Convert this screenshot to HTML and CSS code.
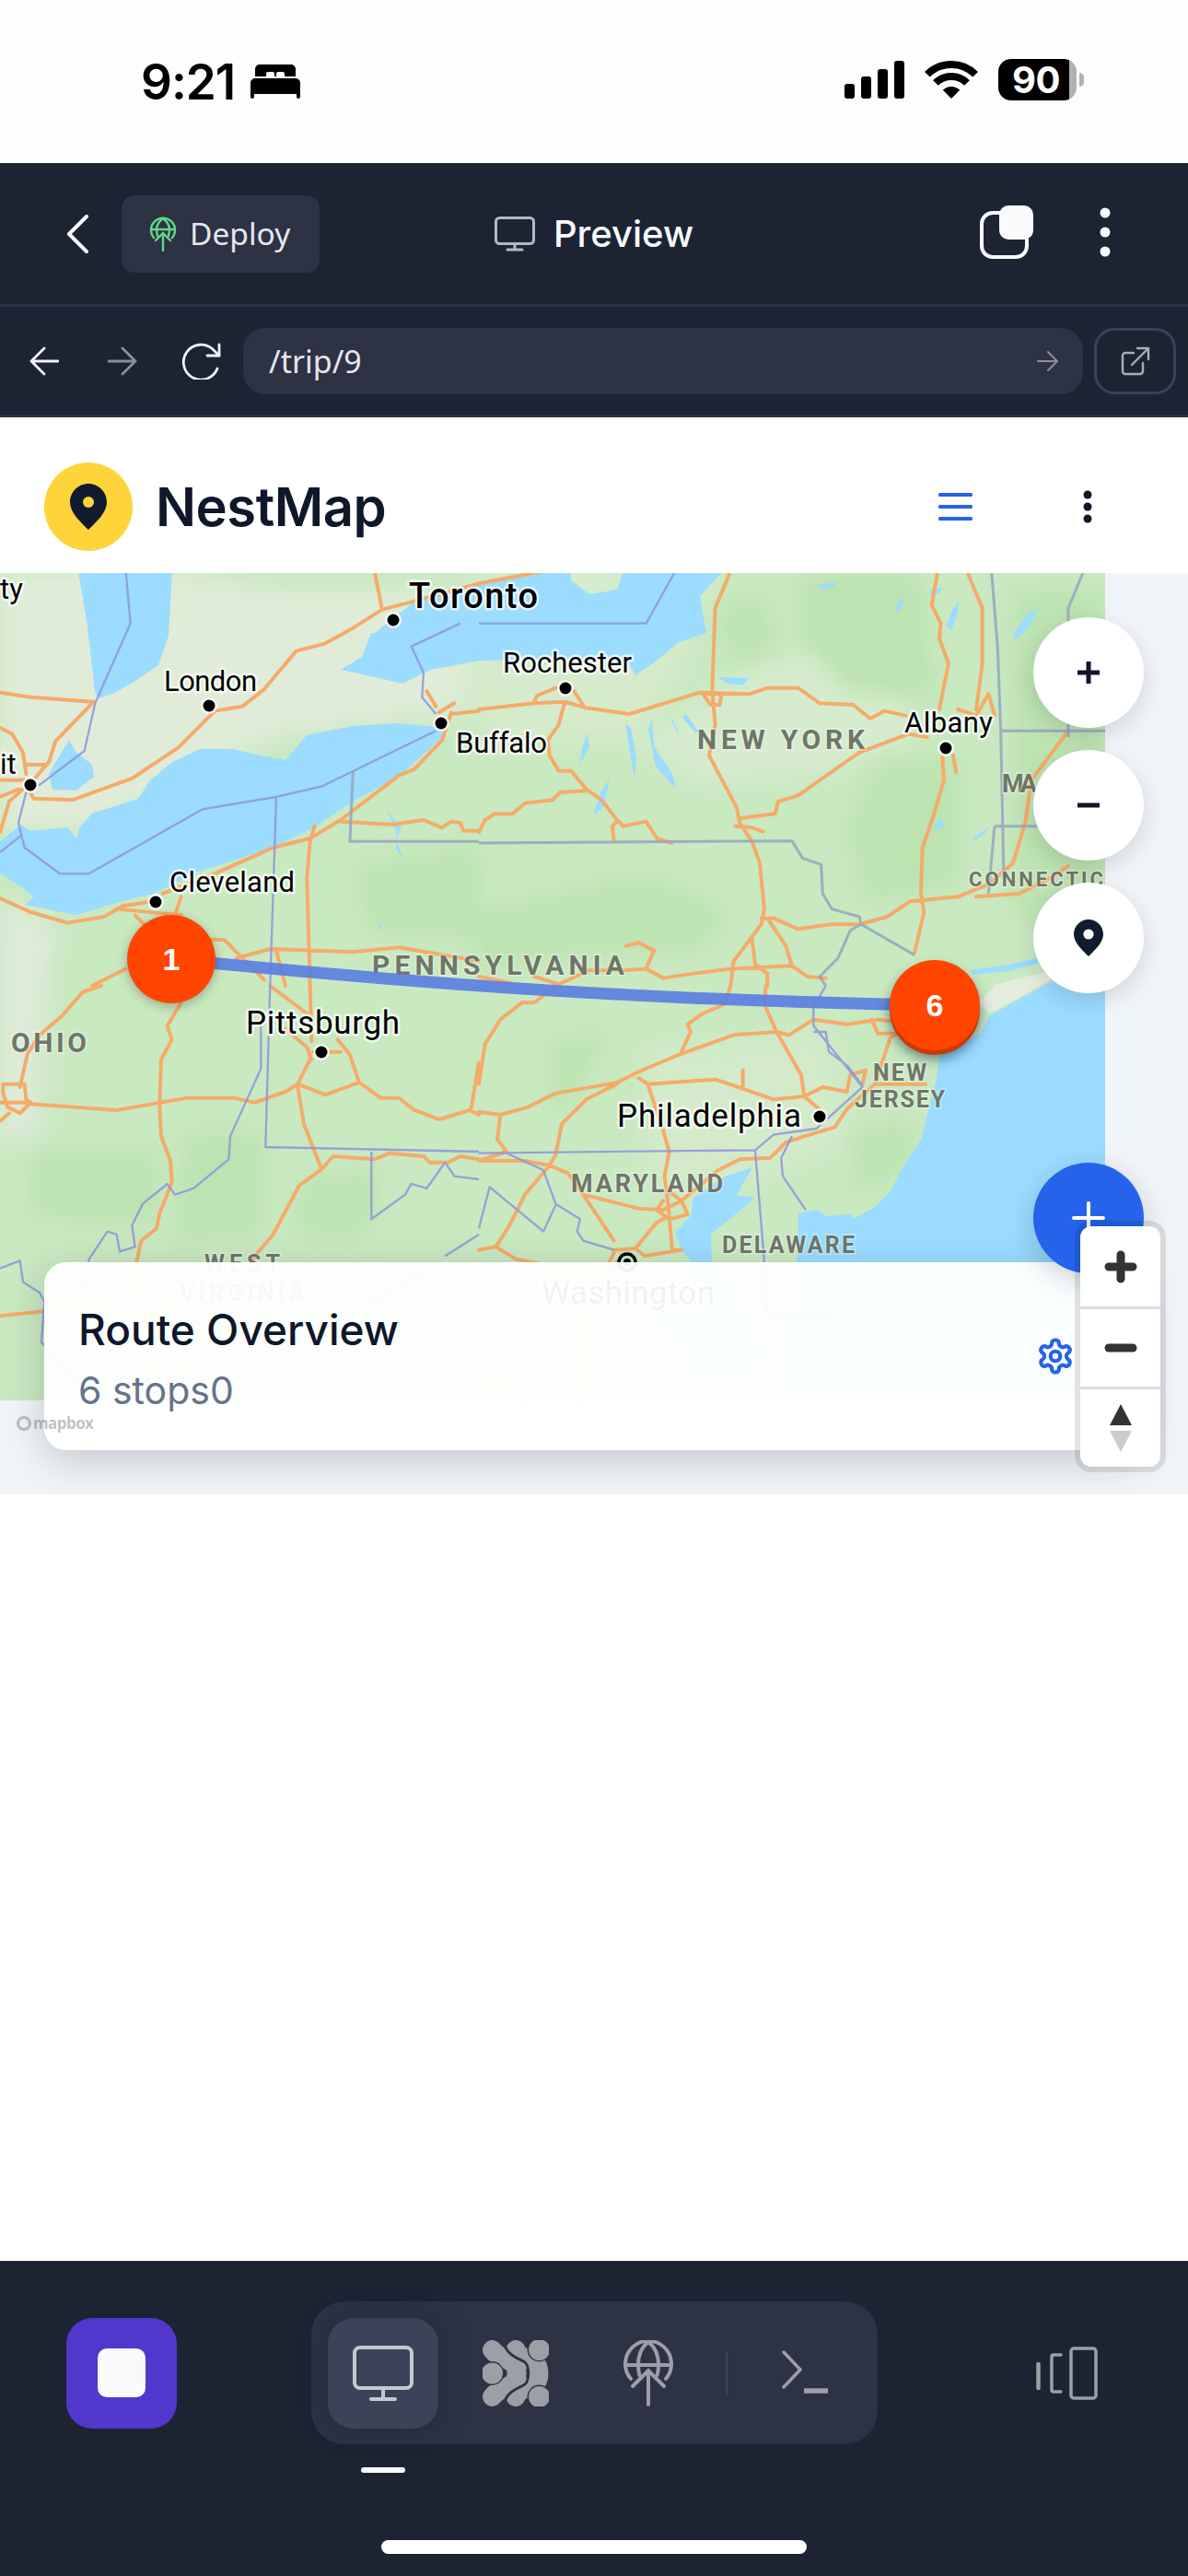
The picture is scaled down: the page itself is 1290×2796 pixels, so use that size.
FILE: index.html
```html
<!DOCTYPE html>
<html lang="en">
<head>
<meta charset="utf-8">
<title>NestMap Preview</title>
<link rel="stylesheet" href="styles.css">
</head>
<body>
<div class="phone">
  <header class="status">
    <div class="status-left">
      <span class="clock">9:21</span>
      <svg class="bed" width="54" height="37" viewBox="0 0 54 37"><path d="M5 13V5a5 5 0 0 1 5-5h34a5 5 0 0 1 5 5v8H37V10a2 2 0 0 0-2-2h-5a2 2 0 0 0-2 2v3h-2V10a2 2 0 0 0-2-2h-5a2 2 0 0 0-2 2v3Z"/><path d="M5 15h44a5 5 0 0 1 5 5v15a2 2 0 0 1-4 0v-3H4v3a2 2 0 0 1-4 0V20a5 5 0 0 1 5-5Z"/></svg>
    </div>
    <div class="status-right">
      <svg width="65" height="41" viewBox="0 0 65 41"><rect x="0" y="25" width="11" height="16" rx="3"/><rect x="18" y="17" width="11" height="24" rx="3"/><rect x="36" y="9" width="11" height="32" rx="3"/><rect x="54" y="0" width="11" height="41" rx="3"/></svg>
      <svg class="wifi" width="58" height="42" viewBox="0 0 58 42"><path d="M29 42 19.800 32.800A13 13 0 0 1 38.200 32.800Z"/><path d="M12 25A24 24 0 0 1 46 25" fill="none" stroke="#000" stroke-width="8"/><path d="M2.800 15.800A37 37 0 0 1 55.200 15.800" fill="none" stroke="#000" stroke-width="8"/></svg>
      <div class="battery"><span class="battery-level">90</span><i class="battery-nub"></i></div>
    </div>
  </header>

  <div class="topbar">
    <div class="topbar-left">
      <svg class="chev" width="24" height="42" viewBox="0 0 24 42"><path d="M22 2 3 21l19 19" fill="none" stroke="#f8fafc" stroke-width="4" stroke-linecap="round" stroke-linejoin="round"/></svg>
      <button class="deploy">
        <svg width="30" height="38" viewBox="0 0 30 38" fill="none" stroke="#62d883" stroke-width="2.400" stroke-linecap="round"><path d="M5 23A13 13 0 1 1 25 23"/><path d="M2 14h26M15 2c-5 4-7 8-7 12 0 3 .5 5 1 7M15 2c5 4 7 8 7 12 0 3-.5 5-1 7"/><path d="M15 37V19M7 26l8-8 8 8"/></svg>
        <span>Deploy</span>
      </button>
    </div>
    <div class="topbar-title">
      <svg width="44" height="38" viewBox="0 0 44 38" fill="none" stroke="#b4b9c0" stroke-width="3" stroke-linecap="round"><rect x="1.500" y="1.500" width="41" height="28" rx="4"/><path d="M22 30v6M14 36h16"/></svg>
      <span>Preview</span>
    </div>
    <div class="topbar-right">
      <div class="copy-icon"><i class="copy-back"></i><i class="copy-front"></i></div>
      <svg width="12" height="54" viewBox="0 0 12 54" fill="#f8fafc"><circle cx="6" cy="6" r="5.500"/><circle cx="6" cy="27" r="5.500"/><circle cx="6" cy="48" r="5.500"/></svg>
    </div>
  </div>

  <div class="navrow">
    <div class="nav-arrows">
      <svg width="32" height="32" viewBox="0 0 32 32" fill="none" stroke="#f1f5f9" stroke-width="2.800" stroke-linecap="round" stroke-linejoin="round"><path d="M31 16H2M16 2 2 16l14 14"/></svg>
      <svg class="nav-fwd" width="32" height="32" viewBox="0 0 32 32" fill="none" stroke="#8a8f98" stroke-width="2.800" stroke-linecap="round" stroke-linejoin="round"><path d="M1 16h29M16 2l14 14-14 14"/></svg>
      <svg class="nav-reload" width="44" height="40" viewBox="0 0 44 40" fill="none" stroke="#f1f5f9" stroke-width="2.800" stroke-linecap="round" stroke-linejoin="round"><path d="M40 28A19 19 0 1 1 35 7l7 7"/><path d="M42 2v12H29"/></svg>
    </div>
    <div class="urlbar">
      <span>/trip/9</span>
      <svg width="24" height="24" viewBox="0 0 24 24" fill="none" stroke="#8a8f98" stroke-width="2" stroke-linecap="round" stroke-linejoin="round"><path d="M1 12h21M12 2l10 10-10 10"/></svg>
    </div>
    <button class="extbtn">
      <svg width="32" height="32" viewBox="0 0 32 32" fill="none" stroke="#a9aeb5" stroke-width="2.400" stroke-linecap="round" stroke-linejoin="round"><path d="M14 7H5a3 3 0 0 0-3 3v17a3 3 0 0 0 3 3h16a3 3 0 0 0 3-3V18"/><path d="M12 20 30 2M18 2h12v12"/></svg>
    </button>
  </div>

  <div class="apphead">
    <div class="brand">
      <div class="brand-logo">
        <svg width="42" height="50" viewBox="0 0 42 50"><path fill="#111a2e" d="M21 0C32 0 41 9 41 20 41 32 28 43 21 50 14 43 1 32 1 20 1 9 10 0 21 0Z"/><circle cx="21" cy="20" r="6" fill="#ffd43b"/></svg>
      </div>
      <span class="brand-name">NestMap</span>
    </div>
    <div class="apphead-actions">
      <svg width="37" height="30" viewBox="0 0 37 30" fill="#2563eb"><rect y="0" width="37" height="4" rx="1.500"/><rect y="13" width="37" height="4" rx="1.500"/><rect y="26" width="37" height="4" rx="1.500"/></svg>
      <svg width="12" height="36" viewBox="0 0 12 36" fill="#0f172a"><circle cx="6" cy="5" r="4.500"/><circle cx="6" cy="18" r="4.500"/><circle cx="6" cy="31" r="4.500"/></svg>
    </div>
  </div>

  <section class="mapwrap">
    <svg class="map" width="1200" height="900" viewBox="0 622 1200 900">
      <defs>
        <filter id="soft" x="-5%" y="-5%" width="110%" height="110%"><feGaussianBlur stdDeviation="12"/></filter>
        <linearGradient id="leftfade" x1="0" x2="1" y1="0" y2="0"><stop offset="0" stop-color="#e6ebe1"/><stop offset="1" stop-color="#e6ebe1" stop-opacity="0"/></linearGradient>
      </defs>
      <rect x="0" y="620" width="1200" height="900" fill="#c9e9c1"/>

      <!-- terrain -->
      <g filter="url(#soft)">
        <path fill="#e0ecd8" d="M0 620H190L300 640 480 640 520 770 300 800 100 900 0 900Z"/>
        <path fill="#d6ebcb" d="M500 620H780L740 720 700 800 540 810 500 760Z"/>
        <path fill="#d6ecce" d="M820 720 960 700 1000 800 900 840 760 850 690 810Z"/>
        <rect x="0" y="980" width="60" height="260" fill="url(#leftfade)"/>
        <path fill="#dfebd9" d="M0 1000H60L30 1240H0Z"/>
        <path fill="#d3ebca" d="M700 1140 900 1120 920 1240 760 1300 700 1280Z"/>
      </g>
      <g filter="url(#soft)" fill="#bce3b0">
        <path d="M785 650 835 650 840 710 790 720Z"/>
        <path d="M870 622 1000 622 1015 760 920 750 870 690Z"/>
        <path d="M950 830 1040 820 1040 960 940 980 920 900Z"/>
        <path d="M520 990 700 950 790 990 760 1030 620 1035 520 1050Z"/>
        <path d="M390 940 520 920 520 1020 400 1010Z"/>
        <path d="M35 1250 170 1250 170 1330 35 1320Z"/>
        <path d="M200 1230 285 1230 285 1340 190 1350Z"/>
        <path d="M330 1280 415 1270 400 1340 320 1340Z"/>
        <path d="M600 1130 660 1120 620 1200 600 1200Z"/>
        <path d="M925 1230 990 1215 985 1270 930 1295Z"/>
        <path d="M1100 640 1200 640 1200 1000 1100 1000Z"/>
      </g>

      <!-- water -->
      <g fill="#9bdcff">
        <path d="M85 620H187L183 690 172 722 150 737 125 752 107 758 103 750 95 680Z"/>
        <path d="M53 840 75 803 83 817 100 830 102 843 83 858 57 857Z"/>
        <path d="M480 790 433 785 383 788 333 798 310 825 283 820 253 813 217 813 187 827 163 847 150 867 100 883 87 897 83 910 73 898 33 902 23 895 0 913V947L37 973 27 982 83 993 133 978 167 970 213 947 297 920 343 897 383 870 433 843 480 800Z"/>
        <path d="M407 687 437 663 450 653 520 635 587 620H785L760 647 767 687 737 697 713 717 690 733 683 720 650 715 520 717 467 727 437 742 407 735 370 727 393 713 403 687Z"/>
        <path d="M1200 1052 1140 1066 1075 1102 1066 1120 1020 1147 1017 1170 1000 1237 980 1267 967 1293 950 1310 927 1323 923 1318 897 1320 887 1313 867 1317 865 1400 850 1520H1200Z"/>
        <path d="M817 1267 787 1277 753 1300 750 1320 733 1337 740 1357 753 1372 773 1372 772 1340 790 1325 820 1300 800 1297Z"/>
        <path d="M1053 1053 1090 1048 1127 1040 1127 1046 1095 1054 1056 1058Z"/>
        <path d="M753 1372 773 1372 800 1420 830 1480 770 1500 720 1430Z"/>
        <path d="M1028 680l6-18 8-10-3 16-6 16ZM1100 690l14-22 14-8-14 24-10 10ZM1010 640l14-2-4 6-10 2ZM889 635l22-3-8 6-12 2ZM978 660l-6 6 4-14 6-4ZM1014 900l6-12 6 10ZM1056 910l8-6 10-6-6 8-10 6ZM780 735l34 1-8 8-16-2ZM640 810l-10 20 2-18 6-16ZM685 790l6 35-2 20-10-60ZM708 780l2 30 20 30 4 16-22-24-8-40ZM730 780l8 18-2-2-8-16ZM745 775l14 20-4 0-14-16ZM662 845l-6 30-12 10 8-24ZM830 1000l14-6-8 6ZM1020 1060l8-10 6 16-8-2ZM410 1000l6 8-4 0ZM420 880l16 18-6 14 8 20-8-10 0-20Z"/>
      </g>
      <path fill="#d5ebcf" d="M620 620H677L670 640 640 645 620 630Z"/>
      <path fill="#e4ecdd" d="M1075 1100 1140 1064 1200 1050V1044L1130 1056 1082 1068 1062 1088Z"/>

      <!-- roads -->
      <g class="roads">
        <g transform="translate(0 620) scale(.3333)">
          <path d="M1220 0 1245 125M1560 40 1340 100 1245 125 1150 185 1060 235 965 260 860 385 790 440 700 455 580 575 430 675 235 745 110 740 85 700M0 395 100 410 305 425 180 555 160 620 100 690M0 510 40 530 75 590 85 660M0 680H90M80 630H150M85 700 30 750 0 850M0 735 60 710M0 1065 100 1110 220 1145 340 1125 400 1090 500 1075M440 1120 470 1150M590 1060 570 1120M380 1100 590 1120M530 1050 700 985 890 900 1010 870 1110 810 1300 665 1350 645 1440 550 1470 460M1480 430 1430 460M1390 390 1420 440M1470 465 1560 455M1110 815 1280 825 1380 810 1440 835 1470 815 1500 820 1510 845 1560 845M1025 830 1010 880 1000 1000 1010 1350M690 1200H730L780 1250 860 1330M770 1260 880 1230 1150 1240 1300 1225 1560 1270M900 1235 930 1350M300 1350 410 1295"/>
        </g>
        <g transform="translate(520 620) scale(.3333)">
          <path d="M210 0 0 40M820 0 770 120 760 390 770 500 750 600 840 770 850 820 890 880 915 950 930 1100 920 1150 830 1270 820 1350M0 450 180 430 280 425 350 445 490 465 720 395 880 400 940 380 1040 380 1110 430 1220 435 1275 480 1320 455 1390 470M180 425 190 405 250 380M310 390 345 445M280 425 260 500 225 550 230 600 260 650 300 650 350 710 400 745 450 810 470 830 545 815 580 870 630 885M350 715 265 720 240 745 150 755 110 790 50 790 20 810 0 850M450 815 435 830 440 880M730 400H790L785 435H755ZM1240 590 1400 530 1460 540M1240 590 1040 730 975 750 965 790 850 805M835 830 890 835 925 848M1495 0 1475 110 1505 170 1500 220 1530 300 1500 450M1510 600 1515 680 1480 800 1445 900 1440 1050 1450 1110 1420 1240M1545 600 1555 655M920 1130H960L1040 1165 1150 1150H1240L1330 1125 1405 1075 1560 1060M940 1130 1000 1220 1020 1285 1070 1320 1130 1325M890 1200 900 1280 940 1310V1350M480 1220 520 1210 570 1235 545 1295 600 1325 700 1310 820 1295 1020 1285M0 1320 100 1340M180 1320 260 1345 360 1300 470 1300 545 1295"/>
        </g>
        <g transform="translate(1040 620) scale(.3333)">
          <path d="M0 450 60 470 100 400 120 470M60 1060 200 1050 300 1000 360 960M0 1060 100 1020 180 950 220 820 240 680 360 520M30 0 80 120 80 300 60 450"/>
        </g>
        <g transform="translate(0 1070) scale(.3333)">
          <path d="M330 0 270 20 200 100 130 160 90 220 65 330M590 55 545 130 560 175 525 240 520 390 525 490 555 570 560 640 520 740 510 790 460 830 445 900 480 1100 480 1350M100 385 380 405 610 365H760L830 380 930 345 970 320 1010 240M10 320H80L85 370 100 380 65 415 25 395 10 350ZM0 380H100M0 440 30 415M970 320 1060 355 1170 315 1140 225 1100 175M1020 215H1110M1015 240 1000 200 930 140M1170 315 1240 365H1300L1350 405 1430 435 1530 405 1560 420M970 330 990 450 1045 590M1045 600 975 650 890 810 830 880 800 960 780 1010M1045 600 1085 555 1220 565 1270 545 1380 555 1400 575H1460L1500 555 1560 565M0 1075 145 1060 330 1050 470 1080 600 1020 800 960M880 0 1000 90M1010 0 1015 180M1535 400 1560 250M560 1240 780 1350"/>
        </g>
        <g transform="translate(520 1070) scale(.3333)">
          <path d="M0 320 20 190 70 110 140 55H180L250 0M0 410 70 420 160 395 250 350 450 315 520 280 650 225 830 160 970 150 1010 160 1090 110 1200 125 1300 110 1340 115M70 420 60 500 90 540 0 570M450 320 350 370 270 450 250 550 230 585 150 680 100 780 55 850 0 860M55 850 120 890 200 905 310 930 420 910 440 870M0 570H150L230 585 290 610 340 680 440 830M340 680 520 725 600 730 660 700 780 600 850 565 950 560 1000 510 1060 490 1160 460 1200 400 1290 320 1340 170 1370 150M520 300 550 320 770 305 860 335 960 370 1060 360 1120 330 1200 345M550 320 600 470 620 540 605 620 620 740M860 275V335M1060 360 1130 420M970 150 930 60 935 0M970 150 1050 290 1060 360M660 215 690 150 680 125 730 90 800 60 820 0M600 700 580 730 620 760 680 745 660 700 620 670M440 860 510 855 580 770 620 750 630 860H660L540 880 510 855M1200 340 1210 290 1260 275 1250 320M1290 320H1455M1280 110 1300 155H1360M450 900 420 950 330 1100 320 1350M0 1280 100 1300 160 1350"/>
        </g>
      </g>

      <!-- borders -->
      <g class="borders">
        <g transform="translate(0 620) scale(.3333)">
          <path d="M410 0 425 170 310 430 275 585 130 695 85 720 60 820 80 900 195 985H290L660 775 900 735 1050 700 1420 520M1500 170 1340 245 1380 330 1375 410 1420 465M0 915 70 860M900 735 880 1350"/>
          <path class="stateline" d="M1150 650 1140 880H1560"/>
        </g>
        <g transform="translate(520 620) scale(.3333)">
          <path d="M640 0 545 170H0"/>
          <path class="stateline" d="M0 885 1020 878 1055 935 1115 955 1120 1050 1150 1100 1240 1125 1245 1150 1420 1250M1245 1150 1210 1170 1170 1260 1110 1320 1130 1350"/>
        </g>
        <g transform="translate(1040 620) scale(.3333)">
          <path class="stateline" d="M110 0 130 250 140 520 150 1000M140 520H480M120 830H480M120 830 100 1050"/>
          <path class="stateline" d="M410 0 360 120V540"/>
        </g>
        <g transform="translate(0 1070) scale(.3333)">
          <path d="M880 0 865 525 1560 540M850 130V270L750 490 745 565 630 660 570 680 545 645 465 710 430 780 440 850 390 865 380 810 350 800 290 890 280 1000M0 920 65 895 75 965 130 1000 145 1030 135 1160 300 1340M1210 540V760L1320 680 1340 645 1390 660 1450 575 1480 620 1560 630M1450 880 1560 810M1380 930 1180 1050"/>
        </g>
        <g transform="translate(520 1070) scale(.3333)">
          <path d="M0 545 900 535 960 485 1100 465 1250 330 1090 130V70M1130 0 1090 70M1250 325 1200 260 1140 215 1130 150H1090M90 545 210 600 250 710 330 760 320 800 340 830 440 860M250 715 210 800 35 655 0 790M900 535 930 900 940 1080H1160M1020 490 985 560 990 620 1065 730"/>
        </g>
      </g>

      <!-- labels -->
      <g class="place">
        <text x="0" y="650" class="f31">ty</text>
        <text x="0" y="840" class="f31">it</text>
        <text x="444" y="660" class="f38" textLength="140">Toronto</text>
        <text x="178" y="750" class="f31" textLength="101">London</text>
        <text x="546" y="730" class="f31" textLength="140">Rochester</text>
        <text x="495" y="817" class="f31" textLength="99">Buffalo</text>
        <text x="982" y="795" class="f31" textLength="96">Albany</text>
        <text x="184" y="968" class="f31" textLength="136">Cleveland</text>
        <text x="267" y="1122" class="f35" textLength="167">Pittsburgh</text>
        <text x="670" y="1223" class="f35" textLength="200">Philadelphia</text>
        <text x="588" y="1415" class="f35" textLength="188">Washington</text>
      </g>
      <g class="state">
        <text x="757" y="813" class="s30" textLength="182">NEW YORK</text>
        <text x="404" y="1058" class="s30" textLength="274">PENNSYLVANIA</text>
        <text x="12" y="1142" class="s30" textLength="82">OHIO</text>
        <text x="948" y="1173" class="s25" textLength="58">NEW</text>
        <text x="928" y="1202" class="s25" textLength="98">JERSEY</text>
        <text x="620" y="1294" class="s27" textLength="165">MARYLAND</text>
        <text x="784" y="1360" class="s25" textLength="144">DELAWARE</text>
        <text x="222" y="1380" class="s25" textLength="82">WEST</text>
        <text x="195" y="1412" class="s25" textLength="135">VIRGINIA</text>
        <text x="1088" y="860" class="s27" textLength="38">MA</text>
        <text x="1052" y="962" class="s22" textLength="146">CONNECTIC</text>
      </g>
      <g class="dots">
        <circle cx="427" cy="673" r="6.500"/><circle cx="227" cy="766" r="6.500"/><circle cx="479" cy="785" r="6.500"/><circle cx="614" cy="747" r="6.500"/><circle cx="1027" cy="812" r="6.500"/><circle cx="33" cy="852" r="6.500"/><circle cx="169" cy="979" r="6.500"/><circle cx="349" cy="1142" r="6.500"/><circle cx="890" cy="1212" r="6.500"/>
      </g>
      <circle cx="681" cy="1370" r="9" fill="none" stroke="#000" stroke-width="3.500"/>
      <circle cx="681" cy="1370" r="4" fill="#000"/>

      <path class="route" d="M186 1041C400 1062 650 1085 1015 1091"/>
    </svg>

    <div class="marker marker-a">1</div>
    <div class="marker marker-b">6</div>

    <div class="card">
      <div class="card-text">
        <h2>Route Overview</h2>
        <p>6 stops0</p>
      </div>
      <svg class="gear" width="42" height="42" viewBox="0 0 24 24" fill="none" stroke="#2563eb" stroke-width="2.400" stroke-linecap="round" stroke-linejoin="round"><path d="M12.220 2h-.44a2 2 0 0 0-2 2v.18a2 2 0 0 1-1 1.730l-.43.25a2 2 0 0 1-2 0l-.15-.08a2 2 0 0 0-2.730.73l-.22.38a2 2 0 0 0 .73 2.730l.15.1a2 2 0 0 1 1 1.720v.51a2 2 0 0 1-1 1.740l-.15.09a2 2 0 0 0-.73 2.730l.22.38a2 2 0 0 0 2.730.73l.15-.08a2 2 0 0 1 2 0l.43.25a2 2 0 0 1 1 1.730V20a2 2 0 0 0 2 2h.44a2 2 0 0 0 2-2v-.18a2 2 0 0 1 1-1.730l.43-.25a2 2 0 0 1 2 0l.15.08a2 2 0 0 0 2.730-.73l.22-.39a2 2 0 0 0-.73-2.730l-.15-.08a2 2 0 0 1-1-1.740v-.5a2 2 0 0 1 1-1.740l.15-.09a2 2 0 0 0 .73-2.730l-.22-.38a2 2 0 0 0-2.730-.73l-.15.08a2 2 0 0 1-2 0l-.43-.25a2 2 0 0 1-1-1.730V4a2 2 0 0 0-2-2z"/><circle cx="12" cy="12" r="3"/></svg>
    </div>

    <div class="attrib"><i></i>mapbox</div>

    <div class="fabs">
      <button class="fab"><svg width="24" height="24" viewBox="0 0 24 24" stroke="#0f172a" stroke-width="5"><path d="M12 0v24M0 12h24"/></svg></button>
      <button class="fab"><svg width="24" height="6" viewBox="0 0 24 6" stroke="#0f172a" stroke-width="5"><path d="M0 3h24"/></svg></button>
      <button class="fab"><svg width="34" height="40" viewBox="0 0 42 50"><path fill="#111a2e" d="M21 0C32 0 41 9 41 20 41 32 28 43 21 50 14 43 1 32 1 20 1 9 10 0 21 0Z"/><circle cx="21" cy="20" r="7" fill="#fff"/></svg></button>
      <button class="fab fab-blue"><svg width="36" height="36" viewBox="0 0 36 36" stroke="#fff" stroke-width="4" stroke-linecap="round"><path d="M18 2v32M2 18h32"/></svg></button>
    </div>

    <div class="ctrl">
      <div class="ctrl-btn"><svg width="36" height="36" viewBox="0 0 36 36" stroke="#333" stroke-width="9" stroke-linecap="round"><path d="M18 5v26M5 18h26"/></svg></div>
      <div class="ctrl-btn"><svg width="36" height="10" viewBox="0 0 36 10" stroke="#333" stroke-width="9" stroke-linecap="round"><path d="M5 5h26"/></svg></div>
      <div class="ctrl-btn"><svg width="24" height="52" viewBox="0 0 24 52"><path fill="#333" d="M12 0 24 23H0Z"/><path fill="#ccc" d="M0 29H24L12 52Z"/></svg></div>
    </div>
  </section>

  <div class="blank"></div>

  <footer class="dock">
    <div class="dock-row">
      <button class="stopbtn"><i></i></button>
      <div class="pill">
        <div class="tab tab-active">
          <svg width="66" height="60" viewBox="0 0 66 60" fill="none" stroke="#c5c9cf" stroke-width="4" stroke-linecap="round"><rect x="2" y="2" width="62" height="44" rx="6"/><path d="M33 46v12M20 58h26"/></svg>
        </div>
        <div class="tab">
          <svg width="72" height="72" viewBox="0 0 72 72">
            <g fill="none" stroke="#9aa0a6" stroke-width="21" stroke-linecap="round">
              <path d="M10.500 10.500C20 24 37 18 37 36 37 54 20 48 10.500 61.500"/>
              <path d="M36 10.500C40 24 61 16 61 36 61 56 40 48 36 61.500"/>
            </g>
            <path d="M24 6C29 18 40 20 46 24 51 28 51 44 46 48 40 52 29 54 24 66" fill="none" stroke="#2d3245" stroke-width="2.800" stroke-linecap="round"/>
            <g fill="#9aa0a6" stroke="#2d3245" stroke-width="2.800" paint-order="stroke">
              <circle cx="10.500" cy="36" r="11.500"/><circle cx="61.500" cy="10.500" r="11.500"/><circle cx="61.500" cy="61.500" r="11.500"/>
            </g>
          </svg>
        </div>
        <div class="tab">
          <svg width="54" height="72" viewBox="0 0 54 72" fill="none" stroke="#9aa0a6" stroke-width="4" stroke-linecap="round"><path d="M8 42A25 25 0 1 1 46 42"/><path d="M2 27h50M27 2c-8 6-11 15-11 25 0 5 .5 8 1.500 11M27 2c8 6 11 15 11 25 0 5-.5 8-1.500 11"/><path d="M27 70V34M10 50l17-17 17 17"/></svg>
        </div>
        <i class="pill-div"></i>
        <div class="tab tab-term">
          <svg width="54" height="50" viewBox="0 0 54 50" fill="none" stroke="#9aa0a6" stroke-width="3.500" stroke-linecap="round" stroke-linejoin="round"><path d="M3 2 21 21 3 40"/><path d="M25 44H51" stroke-width="5.500" stroke-linecap="butt"/></svg>
        </div>
      </div>
      <svg class="devices" width="67" height="58" viewBox="0 0 67 58" fill="none" stroke="#9aa0a6" stroke-width="3.500" stroke-linecap="round"><rect x="38" y="2" width="27" height="54" rx="3"/><path d="M27 9h-8a2 2 0 0 0-2 2v36a2 2 0 0 0 2 2h8"/><path d="M2.500 19v26" stroke-width="4.500"/></svg>
    </div>
    <i class="tab-indicator"></i>
    <i class="homebar"></i>
  </footer>
</div>
</body>
</html>
```
FILE: styles.css
```css
* { box-sizing: border-box; }
html, body { margin: 0; padding: 0; background: #fff; }
button { border: 0; padding: 0; font: inherit; color: inherit; background: none; }
svg { display: block; flex: none; }
i { display: block; }
.phone { width: 1290px; height: 2796px; display: flex; flex-direction: column; font-family: Inter, "Noto Sans", sans-serif; overflow: hidden; }

.status { height: 177px; background: #fdfdfd; display: flex; justify-content: space-between; padding: 64px 121px 0 153px; }
.status-left { display: flex; align-items: flex-start; gap: 17px; }
.clock { font: 600 53px/50px Inter, sans-serif; color: #000; letter-spacing: -1px; }
.bed { margin-top: 6px; }
.status-right { display: flex; align-items: flex-start; gap: 22px; }
.status-right > svg { margin-top: 2px; }
.status-right > .wifi { margin-top: 1px; }
.battery { position: relative; width: 85px; height: 45px; border-radius: 14px; background: linear-gradient(90deg, #000 0, #000 77px, #b0b0b0 77px); color: #fff; font: 700 40px/45px Inter, sans-serif; padding-left: 15px; letter-spacing: -.5px; }
.battery-nub { position: absolute; left: 88px; top: 15px; width: 5px; height: 15px; background: #b0b0b0; border-radius: 0 5px 5px 0; }

.topbar { height: 156px; background: #1c2333; border-bottom: 3px solid #2b3245; display: grid; grid-template-columns: 1fr auto 1fr; align-items: start; padding: 35px 0 0 72px; position: relative; }
.topbar-left { display: flex; align-items: center; gap: 36px; }
.deploy { width: 215px; height: 84px; border-radius: 14px; background: #2d3245; display: flex; align-items: center; gap: 14px; padding-left: 30px; color: #e5e7eb; font: 400 33.500px/1 "Noto Sans", sans-serif; }
.topbar-title { display: flex; align-items: center; gap: 20px; color: #f8fafc; font: 500 40px/1 Inter, sans-serif; margin: 22px 72px 0 0; }
.topbar-right { display: flex; align-items: center; justify-content: flex-end; gap: 72px; padding-right: 84px; margin-top: 11px; }
.copy-icon { position: relative; width: 58px; height: 58px; }
.copy-back { position: absolute; left: 0; top: 6px; width: 53px; height: 52px; border: 4px solid #f8fafc; border-radius: 14px; }
.copy-front { position: absolute; left: 21px; top: 0; width: 37px; height: 37px; background: #f8fafc; border-radius: 10px; }

.navrow { height: 120px; background: #1c2333; border-bottom: 3px solid #2b3245; display: flex; align-items: flex-start; padding: 23px 13px 0 32px; gap: 12px; }
.nav-arrows { display: flex; align-items: center; height: 72px; width: 220px; }
.nav-fwd { margin-left: 53px; }
.nav-reload { margin-left: 47px; }
.urlbar { width: 912px; height: 72px; background: #2d3245; border-radius: 24px; display: flex; align-items: center; justify-content: space-between; padding: 0 26px 0 28px; color: #e5e7eb; font: 400 34px/1 "Noto Sans", sans-serif; }
.extbtn { width: 89px; height: 72px; border: 3px solid #3a4258; border-radius: 22px; display: flex; align-items: center; justify-content: center; }

.apphead { height: 169px; background: #fff; display: flex; justify-content: space-between; align-items: center; padding: 24px 103px 0 48px; }
.brand { display: flex; align-items: center; gap: 25px; }
.brand-logo { width: 96px; height: 96px; border-radius: 50%; background: #ffd43b; display: flex; align-items: center; justify-content: center; }
.brand-name { font: 600 58px/1 Inter, sans-serif; color: #0f172a; letter-spacing: -.5px; }
.apphead-actions { display: flex; align-items: center; gap: 119px; }

.mapwrap { height: 1000px; background: #f1f5f9; position: relative; overflow: hidden; flex: none; }
.map { position: absolute; left: 0; top: 0; }
.roads path { fill: none; stroke: #f5ab69; stroke-width: 12; stroke-linejoin: round; stroke-linecap: round; }
.borders path { fill: none; stroke: #8d95d8; stroke-width: 7; stroke-linejoin: round; opacity: .85; }
.borders path.stateline { stroke: #98a3bd; stroke-width: 9; }
.place text { font-family: Roboto, "Noto Sans", sans-serif; fill: #000; stroke: #fff; stroke-width: 5px; stroke-opacity: .75; paint-order: stroke; stroke-linejoin: round; }
.f31 { font-size: 31px; }
.f35 { font-size: 35px; }
.f38 { font-size: 38px; font-weight: 500; }
.state text { font-family: Roboto, "Noto Sans", sans-serif; font-weight: 700; fill: #6f7669; stroke: #fff; stroke-width: 3px; stroke-opacity: .4; paint-order: stroke; }
.s30 { font-size: 30px; }
.s27 { font-size: 27px; }
.s25 { font-size: 25px; }
.s22 { font-size: 22px; }
.dots circle { fill: #000; stroke: #fff; stroke-width: 5px; stroke-opacity: .85; paint-order: stroke; }
.route { fill: none; stroke: #5b7fe0; stroke-width: 13; opacity: .92; }

.marker { position: absolute; border-radius: 50%; background: #ff4500; color: #fff; display: flex; align-items: center; justify-content: center; font: 700 34px/1 "Liberation Sans", sans-serif; }
.marker-a { left: 138px; top: 371px; width: 96px; height: 96px; box-shadow: 0 3px 12px rgba(0,0,0,.28); }
.marker-b { left: 966px; top: 420px; width: 98px; height: 98px; box-shadow: 0 5px 0 #c93a08, 0 9px 14px rgba(0,30,60,.55); }

.card { position: absolute; left: 48px; right: 48px; top: 748px; height: 204px; border-radius: 24px; background: rgba(255,255,255,.95); box-shadow: 0 12px 44px rgba(15,23,42,.2); display: flex; justify-content: space-between; align-items: center; padding: 0 75px 0 37px; }
.card-text { align-self: flex-start; padding-top: 45px; }
.card-text h2 { margin: 0; font: 500 46px/56px Inter, sans-serif; color: #0f172a; }
.card-text p { margin: 14px 0 0; font: 400 41px/48px Inter, sans-serif; color: #64748b; }

.attrib { position: absolute; left: 18px; top: 914px; display: flex; align-items: center; gap: 2px; font: 700 17px/18px "Noto Sans", sans-serif; color: rgba(60,60,60,.32); letter-spacing: -.5px; }
.attrib i { width: 16px; height: 16px; border-radius: 50%; border: 3px solid rgba(60,60,60,.3); }

.fabs { position: absolute; left: 1122px; top: 48px; display: flex; flex-direction: column; gap: 24px; }
.fab { width: 120px; height: 120px; border-radius: 50%; background: #fff; box-shadow: 0 8px 24px rgba(15,23,42,.14); display: flex; align-items: center; justify-content: center; }
.fab-blue { background: #2563eb; box-shadow: 0 8px 30px rgba(15,23,42,.2); margin-top: 160px; }

.ctrl { position: absolute; left: 1167px; top: 703px; width: 99px; border: 6px solid rgba(0,0,0,.1); border-radius: 18px; background: #fff; background-clip: padding-box; display: flex; flex-direction: column; }
.ctrl-btn { height: 87px; display: flex; align-items: center; justify-content: center; }
.ctrl-btn + .ctrl-btn { border-top: 3px solid #ddd; }

.blank { flex: 1; background: #fff; }

.dock { height: 342px; background: #1c2333; display: flex; flex-direction: column; flex: none; }
.dock-row { display: flex; align-items: center; height: 199px; padding: 44px 0 0 72px; }
.stopbtn { width: 120px; height: 120px; border-radius: 28px; background: #5237cc; display: flex; align-items: center; justify-content: center; }
.stopbtn i { width: 52px; height: 53px; border-radius: 10px; background: #f8fafc; }
.pill { margin-left: 146px; width: 615px; height: 155px; border-radius: 36px; background: #2d3245; display: flex; align-items: center; padding-left: 18px; }
.tab { width: 120px; height: 120px; border-radius: 28px; display: flex; align-items: center; justify-content: center; }
.tab + .tab { margin-left: 24px; }
.tab-active { background: #3b4359; box-shadow: 0 0 30px rgba(20,26,40,.35); }
.pill-div { width: 2px; height: 48px; background: #3b4359; margin-left: 24px; }
.tab.tab-term { margin-left: 58px; width: 54px; }
.devices { margin-left: 172px; }
.tab-indicator { width: 48px; height: 6px; border-radius: 3px; background: #f8fafc; margin: 25px 0 0 392px; }
.homebar { width: 462px; height: 15px; border-radius: 8px; background: #fff; margin: 73px 0 0 414px; }
```
